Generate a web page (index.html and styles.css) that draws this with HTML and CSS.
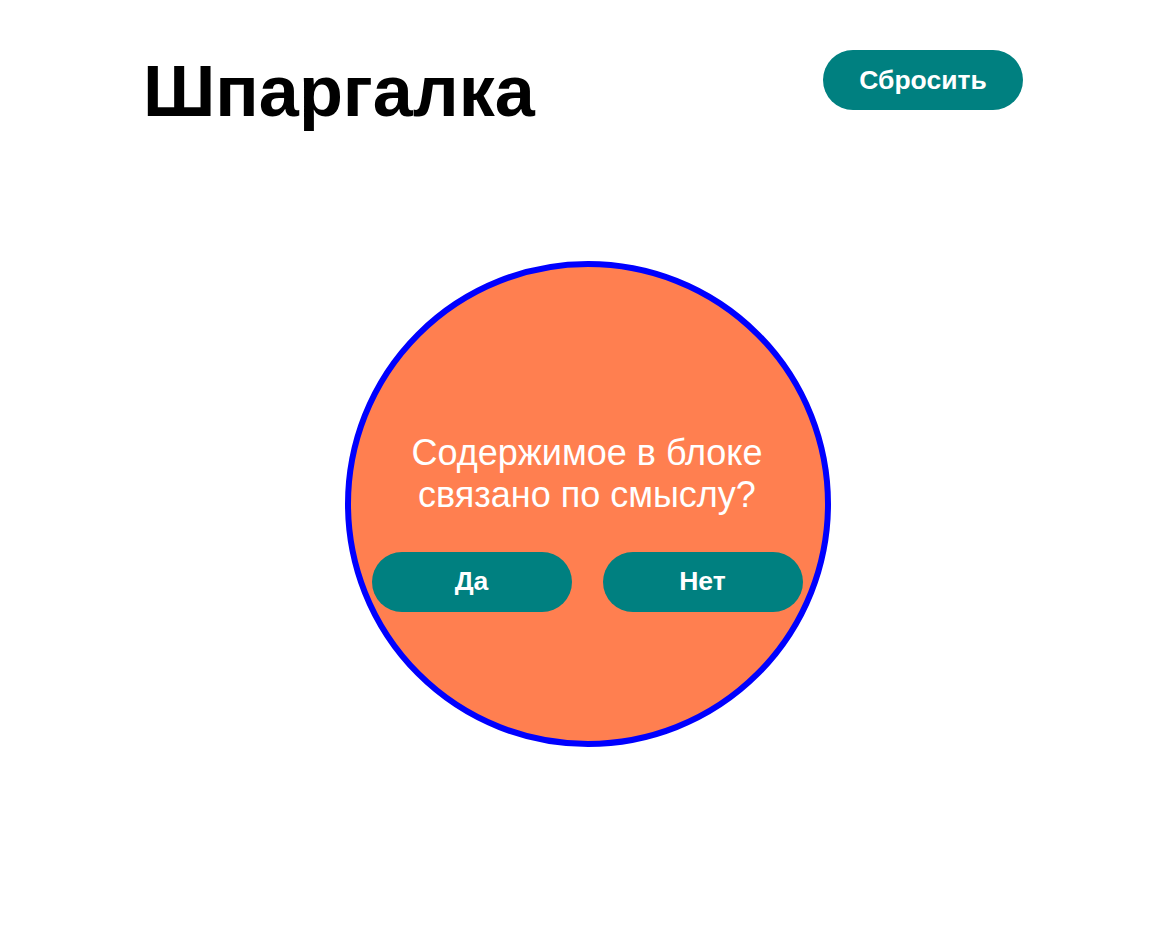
FILE: index.html
```html
<!DOCTYPE html>
<html lang="ru">
<head>
<meta charset="utf-8">
<title>Шпаргалка</title>
<link rel="stylesheet" href="styles.css">
</head>
<body>
<header class="header">
  <h1 class="title">Шпаргалка</h1>
  <button class="btn btn-reset">Сбросить</button>
</header>
<main class="stage">
  <div class="circle">
    <p class="question">Содержимое в блоке<br>связано по смыслу?</p>
    <div class="answers">
      <button class="btn">Да</button>
      <button class="btn">Нет</button>
    </div>
  </div>
</main>
</body>
</html>
```
FILE: styles.css
```css
* { box-sizing: border-box; }
body {
  margin: 0;
  background: #fff;
  font-family: "Liberation Sans", Arial, sans-serif;
}
.header {
  display: flex;
  justify-content: space-between;
  align-items: flex-start;
  padding: 50px 148px 0 143px;
}
.title {
  margin: 0;
  font-size: 72px;
  font-weight: 700;
  color: #000;
}
.btn {
  width: 200px;
  height: 60px;
  border: none;
  border-radius: 30px;
  background: #008080;
  color: #fff;
  font-family: "Liberation Sans", Arial, sans-serif;
  font-size: 26.5px;
  font-weight: 700;
  padding: 0;
}
.stage {
  display: flex;
  justify-content: center;
  padding: 129px 0 0 5px;
}
.circle {
  width: 486px;
  height: 486px;
  border: 6px solid #0000ff;
  border-radius: 50%;
  background: #ff7f50;
  display: flex;
  flex-direction: column;
  align-items: center;
  justify-content: center;
  padding: 35px 2px 0 0;
}
.question {
  margin: 0 0 36px;
  font-size: 36px;
  color: #fff;
  text-align: center;
}
.answers {
  display: flex;
  gap: 31px;
}
```
